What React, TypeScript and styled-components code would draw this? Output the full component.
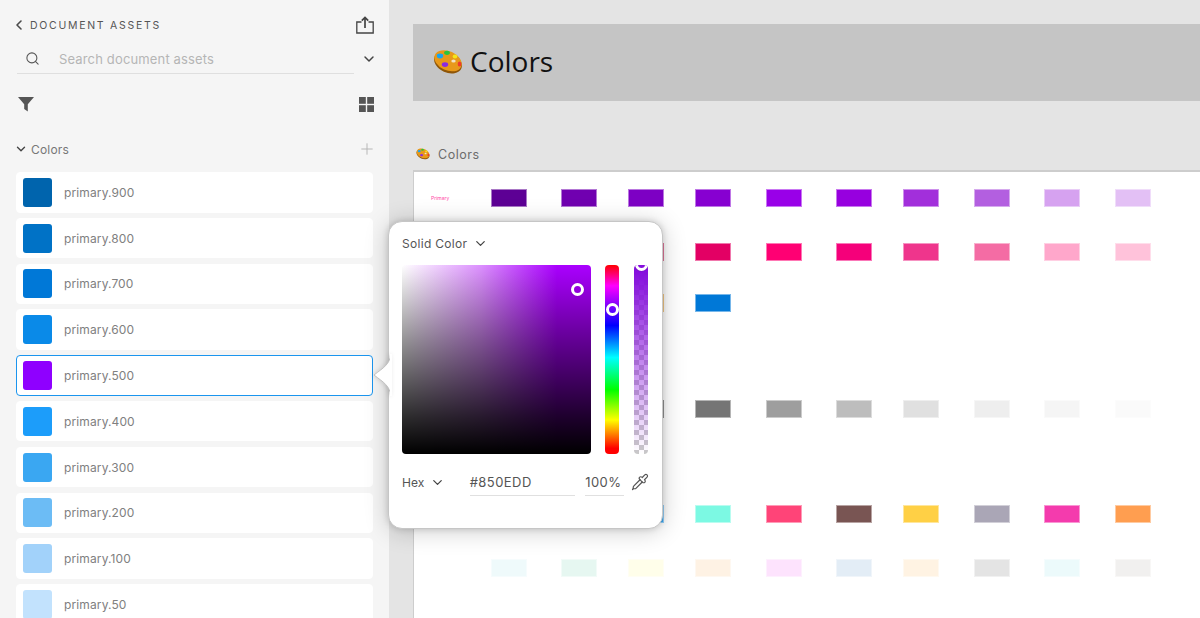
import React from "react";
import styled, { createGlobalStyle } from "styled-components";
import { ChevronDown, ChevronLeft, Pipette, Plus, Search } from "lucide-react";

const Global = createGlobalStyle`
  html, body { margin: 0; padding: 0; background: #e4e4e4; }
  * { box-sizing: border-box; }
`;

const Page = styled.div`
  position: relative;
  display: flex;
  width: 1200px;
  height: 618px;
  overflow: hidden;
  font-family: Inter, "Liberation Sans", sans-serif;
  color: #666;
`;

const Sidebar = styled.aside`
  flex: 0 0 389px;
  height: 618px;
  overflow: hidden;
  background: #f5f5f5;
  padding: 16px 16px 0;
`;

const TitleBar = styled.div`
  display: flex;
  align-items: center;
  height: 18px;
  color: #4b4b4b;
`;

const Title = styled.h1`
  flex: 1;
  margin: 0 0 0 3px;
  font-size: 10.5px;
  font-weight: 400;
  letter-spacing: 1.72px;
  color: #555;
`;

const UploadWrap = styled.span`
  display: flex;
  margin-right: -1px;
`;

const SearchBar = styled.div`
  display: flex;
  align-items: center;
  height: 30px;
  margin-top: 10px;
`;

const SearchField = styled.div`
  display: flex;
  align-items: center;
  flex: 0 0 337px;
  height: 30px;
  margin-left: 1px;
  padding-left: 8px;
  border-bottom: 1px solid #dfdfdf;
`;

const Placeholder = styled.span`
  margin-left: 19px;
  font-size: 13px;
  letter-spacing: 0.15px;
  color: #b5b5b5;
`;

const SearchChevron = styled.span`
  display: flex;
  margin-left: 7px;
  color: #444;
`;

const ToolRow = styled.div`
  display: flex;
  align-items: center;
  justify-content: space-between;
  height: 20px;
  width: 358px;
  margin-top: 20px;
  padding: 0 0 0 2px;
`;

const SectionRow = styled.div`
  display: flex;
  align-items: center;
  width: 360px;
  height: 18px;
  margin-top: 26px;
`;

const SectionName = styled.span`
  flex: 1;
  margin-left: 3px;
  font-size: 12px;
  letter-spacing: 0.2px;
  color: #777;
`;

const SwatchList = styled.ul`
  display: flex;
  flex-direction: column;
  gap: 5.3px;
  margin: 14px 0 0;
  padding: 0;
  list-style: none;
`;

const Item = styled.li<{ $active?: boolean }>`
  display: flex;
  align-items: center;
  flex: 0 0 40.5px;
  width: 357px;
  height: 40.5px;
  padding-left: 6px;
  background: #fff;
  border-radius: 4px;
  border: 1px solid ${(p) => (p.$active ? "#1b95ee" : "#fff")};
`;

const Chip = styled.span<{ $color: string }>`
  width: 29px;
  height: 29px;
  border-radius: 3px;
  background: ${(p) => p.$color};
`;

const ItemName = styled.span`
  margin-left: 12px;
  font-size: 12px;
  letter-spacing: 0.12px;
  color: #808080;
`;

const Main = styled.main`
  flex: 1;
  display: flex;
  flex-direction: column;
  min-width: 0;
  padding: 24px 0 0 24px;
  background: #e4e4e4;
`;

const Banner = styled.header`
  display: flex;
  align-items: center;
  height: 77px;
  flex: 0 0 77px;
  padding: 0 0 2px 20px;
  background: #c5c5c5;
`;

const BannerTitle = styled.h2`
  margin: 0 0 2px 7px;
  font-family: "Open Sans", sans-serif;
  font-size: 28px;
  font-weight: 400;
  color: #111;
`;

const BoardLabel = styled.div`
  display: flex;
  align-items: center;
  flex: 0 0 18px;
  margin-top: 44px;
  padding-left: 3px;
  font-size: 12.5px;
  letter-spacing: 0.55px;
  color: #6c6c6c;
`;

const BoardName = styled.span`
  margin-left: 8px;
`;

const Board = styled.section`
  flex: 1;
  margin-top: 7px;
  padding-top: 17px;
  background: #fff;
  border-top: 2px solid #cdcdcd;
  border-left: 1px solid #cdcdcd;
`;

const SwatchRow = styled.div<{ $top: number }>`
  display: grid;
  grid-template-columns: 77px 70px 67px 67px 71px 70px 67px 71px 70px 71px 36px;
  align-items: center;
  height: 18px;
  margin-top: ${(p) => p.$top}px;
`;

const RowLabel = styled.span`
  padding-left: 17px;
  font-size: 5px;
  color: #ff3fa8;
`;

const Swatch = styled.span<{ $color: string; $edge: string }>`
  width: 36px;
  height: 18px;
  background: ${(p) => p.$color};
  background-clip: padding-box;
  border: 1px solid ${(p) => p.$edge};
`;

const Popover = styled.div`
  position: absolute;
  left: 388px;
  top: 221px;
  width: 275px;
  height: 308px;
  padding: 14px 13px 0;
  background: #fff;
  border: 1px solid #c6c6c6;
  border-radius: 14px;
  box-shadow: 0 0 6px rgba(0, 0, 0, 0.16), 0 2px 24px rgba(0, 0, 0, 0.2);
`;

const Caret = styled.svg`
  position: absolute;
  left: -16px;
  top: 132px;
  width: 19px;
  height: 42px;
  filter: drop-shadow(-1px 0 2px rgba(0, 0, 0, 0.12));
`;

const PopHead = styled.div`
  display: flex;
  align-items: center;
  height: 14px;
  font-size: 12px;
  letter-spacing: 0.3px;
  color: #555;
`;

const DropIcon = styled.span`
  display: flex;
  margin-left: 6px;
  color: #444;
`;

const Pickers = styled.div`
  display: flex;
  margin-top: 15px;
`;

const Field = styled.div`
  position: relative;
  width: 189px;
  height: 189px;
  border-radius: 4px;
  background:
    linear-gradient(to bottom, rgba(0, 0, 0, 0), rgba(0, 0, 0, 0.42) 40%, rgba(0, 0, 0, 0.82) 80%, #000),
    linear-gradient(to right, #fff, #dc8fff 42%, #aa00ff 82%, #aa00ff);
`;

const Ring = styled.span<{ $x: number; $y: number }>`
  position: absolute;
  left: ${(p) => p.$x}px;
  top: ${(p) => p.$y}px;
  width: 13px;
  height: 13px;
  border: 3px solid #fff;
  border-radius: 50%;
  box-shadow: 0 0 1px rgba(0, 0, 0, 0.4);
`;

const Hue = styled.div`
  position: relative;
  width: 14px;
  height: 189px;
  margin-left: 14px;
  border-radius: 4px;
  background: linear-gradient(
    to bottom,
    #f00 0%,
    #f0f 11%,
    #00f 32%,
    #0ff 49%,
    #0f0 66%,
    #ff0 82%,
    #f00 97%
  );
`;

const Alpha = styled.div`
  position: relative;
  width: 14px;
  height: 189px;
  margin-left: 15px;
  overflow: hidden;
  border-radius: 4px;
  background:
    linear-gradient(to bottom, #850edd 3%, rgba(133, 14, 221, 0) 100%),
    conic-gradient(#c9c9c9 25%, #fff 0 50%, #c9c9c9 0 75%, #fff 0) 0 0 / 10px 10px;
`;

const ValueRow = styled.div`
  display: flex;
  align-items: center;
  height: 28px;
  margin-top: 14px;
  font-size: 12px;
  color: #555;
`;

const ModeLabel = styled.span`
  width: 26px;
`;

const ModeChevron = styled.span`
  display: flex;
  width: 42px;
  color: #444;
`;

const ValueInput = styled.span<{ $w: number }>`
  display: flex;
  align-items: center;
  width: ${(p) => p.$w}px;
  height: 28px;
  margin-right: 10px;
  font-size: 13px;
  letter-spacing: 0.45px;
  border-bottom: 1px solid #e0e0e0;
`;

const Dropper = styled.span`
  display: flex;
  margin-left: -3px;
  color: #555;
`;

const Palette = ({ size }: { size: number }) => (
  <svg width={size} height={size} viewBox="0 0 30 30" aria-hidden="true">
    <ellipse cx="15" cy="15.5" rx="14.6" ry="10" fill="#8f5608" transform="rotate(24 15 15.5)" />
    <ellipse cx="15" cy="13.8" rx="14.4" ry="9.6" fill="#e8991a" transform="rotate(24 15 13.8)" />
    <ellipse cx="7" cy="9" rx="3.2" ry="2.4" fill="#19a4f0" />
    <ellipse cx="14" cy="5.8" rx="2.9" ry="2.1" fill="#2dc43b" />
    <ellipse cx="22" cy="9.5" rx="2.3" ry="1.9" fill="#f5e51b" />
    <ellipse cx="12" cy="17.6" rx="3.2" ry="2.4" fill="#8a2be2" />
    <ellipse cx="26.5" cy="17" rx="1.8" ry="2.5" fill="#ee3a2d" />
    <ellipse cx="20.5" cy="14" rx="2.2" ry="1.6" fill="#f4e3c6" />
  </svg>
);

const UploadIcon = () => (
  <svg width="18" height="18" viewBox="0 0 18 18" fill="none" stroke="#444" strokeWidth="1.3" aria-hidden="true">
    <path d="M5.5 6H.8v11h16.4V6h-4.7" />
    <path d="M9 12V1.5M5.8 4.6 9 1.4l3.2 3.2" strokeWidth="1.7" />
  </svg>
);

const FilterIcon = () => (
  <svg width="16" height="16" viewBox="0 0 16 16" fill="#555" aria-hidden="true">
    <path d="M0 1h16L9.8 8.2V15.5L6.2 13V8.2z" />
  </svg>
);

const GridIcon = () => (
  <svg width="15" height="15" viewBox="0 0 15 15" fill="#555" aria-hidden="true">
    <rect width="6.8" height="6.8" />
    <rect x="8.2" width="6.8" height="6.8" />
    <rect y="8.2" width="6.8" height="6.8" />
    <rect x="8.2" y="8.2" width="6.8" height="6.8" />
  </svg>
);

const items: [string, string][] = [
  ["primary.900", "#0064ad"],
  ["primary.800", "#0072c6"],
  ["primary.700", "#0078d7"],
  ["primary.600", "#0a8ae8"],
  ["primary.500", "#8f00ff"],
  ["primary.400", "#1c9dfa"],
  ["primary.300", "#3aa7f2"],
  ["primary.200", "#6cbcf5"],
  ["primary.100", "#a2d2fa"],
  ["primary.50", "#c2e2fd"],
];

type Row = { top: number; label?: string; colors: (string | null)[] };

const rows: Row[] = [
  {
    top: 0,
    label: "Primary",
    colors: ["#5d0095", "#7000b0", "#7d00c4", "#8700d1", "#9900e8", "#9700df", "#a22fdb", "#b35fe0", "#d6a2f0", "#e3c0f5"],
  },
  {
    top: 36,
    colors: ["#880e4f", "#ad1457", "#c4003f", "#e30064", "#ff0073", "#f5007a", "#ef358c", "#f46ca4", "#ffa7cb", "#ffc2da"],
  },
  {
    top: 33,
    colors: ["#e65100", "#ef6c00", "#e8981c", "#0078d7", null, null, null, null, null, null],
  },
  {
    top: 88,
    colors: ["#111111", "#222222", "#333333", "#757575", "#9e9e9e", "#bdbdbd", "#e0e0e0", "#eeeeee", "#f5f5f5", "#fafafa"],
  },
  {
    top: 87,
    colors: ["#00c853", "#ffab00", "#3aa7f2", "#7cf9e3", "#ff4478", "#795553", "#ffd045", "#aaa6b6", "#f43bad", "#ff9e50"],
  },
  {
    top: 36,
    colors: ["#effafb", "#e6f7f1", "#fffeea", "#fef2e4", "#fde3fd", "#e3edf6", "#fff3e3", "#e4e4e4", "#ecfafb", "#f1f0ef"],
  },
];

const edgeFor = (c: string) => `${c}88`;

export default function App() {
  return (
    <Page>
      <Global />
      <Sidebar>
        <TitleBar>
          <ChevronLeft size={16} strokeWidth={2.4} style={{ marginLeft: -5 }} />
          <Title>DOCUMENT ASSETS</Title>
          <UploadWrap>
            <UploadIcon />
          </UploadWrap>
        </TitleBar>
        <SearchBar>
          <SearchField>
            <Search size={15} strokeWidth={1.7} color="#555" />
            <Placeholder>Search document assets</Placeholder>
          </SearchField>
          <SearchChevron>
            <ChevronDown size={16} strokeWidth={2.2} />
          </SearchChevron>
        </SearchBar>
        <ToolRow>
          <FilterIcon />
          <GridIcon />
        </ToolRow>
        <SectionRow>
          <ChevronDown size={14} strokeWidth={2.4} color="#444" style={{ marginLeft: -2 }} />
          <SectionName>Colors</SectionName>
          <Plus size={18} strokeWidth={1.3} color="#b5b5b5" />
        </SectionRow>
        <SwatchList>
          {items.map(([name, color]) => (
            <Item key={name} $active={name === "primary.500"}>
              <Chip $color={color} />
              <ItemName>{name}</ItemName>
            </Item>
          ))}
        </SwatchList>
      </Sidebar>
      <Main>
        <Banner>
          <Palette size={30} />
          <BannerTitle>Colors</BannerTitle>
        </Banner>
        <BoardLabel>
          <Palette size={14} />
          <BoardName>Colors</BoardName>
        </BoardLabel>
        <Board>
          {rows.map((row, i) => (
            <SwatchRow key={i} $top={row.top}>
              <RowLabel>{row.label}</RowLabel>
              {row.colors.map((c, j) =>
                c ? <Swatch key={j} $color={c} $edge={edgeFor(c)} /> : <span key={j} />
              )}
            </SwatchRow>
          ))}
        </Board>
      </Main>
      <Popover>
        <Caret viewBox="0 0 19 42" aria-hidden="true">
          <path d="M17.5 0C17.5 10 10 14 1 21C10 28 17.5 32 17.5 42Z" fill="#fff" stroke="#c0c0c0" />
          <rect x="17" y="0" width="2" height="42" fill="#fff" />
        </Caret>
        <PopHead>
          Solid Color
          <DropIcon>
            <ChevronDown size={15} strokeWidth={2} />
          </DropIcon>
        </PopHead>
        <Pickers>
          <Field>
            <Ring $x={169} $y={18} />
          </Field>
          <Hue>
            <Ring $x={1} $y={38} />
          </Hue>
          <Alpha>
            <Ring $x={1} $y={-7} />
          </Alpha>
        </Pickers>
        <ValueRow>
          <ModeLabel>Hex</ModeLabel>
          <ModeChevron>
            <ChevronDown size={15} strokeWidth={2} style={{ marginLeft: 2 }} />
          </ModeChevron>
          <ValueInput $w={106}>#850EDD</ValueInput>
          <ValueInput $w={39}>100%</ValueInput>
          <Dropper>
            <Pipette size={18} strokeWidth={1.6} />
          </Dropper>
        </ValueRow>
      </Popover>
    </Page>
  );
}
